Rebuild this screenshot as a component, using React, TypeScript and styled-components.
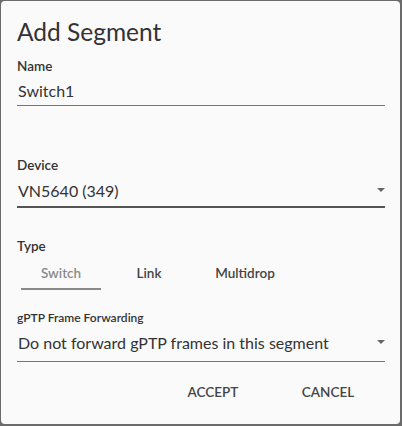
import React from "react";
import styled, { createGlobalStyle } from "styled-components";

const Global = createGlobalStyle`
  html, body { margin: 0; padding: 0; background: #6b6b6b; }
  body { font-family: "Lato", "Noto Sans", sans-serif; }
`;

const Frame = styled.div`
  width: 402px;
  height: 426px;
  box-sizing: border-box;
  padding: 1px 2px 2px 1px;
  background: #6b6b6b;
`;

const Dialog = styled.div`
  height: 100%;
  box-sizing: border-box;
  background: #fafafa;
  border-radius: 4px;
  padding: 14px 15px 0 16px;
  display: flex;
  flex-direction: column;
  color: #333;
`;

const Title = styled.h1`
  margin: 0;
  font-size: 24.5px;
  font-weight: 400;
  line-height: 34px;
  color: #333;
`;

const Label = styled.div<{ $small?: boolean }>`
  font-size: ${(p) => (p.$small ? "12px" : "13.5px")};
  font-weight: 600;
  color: #333;
  line-height: 18px;
`;

const Field = styled.div<{ $focused?: boolean; $h: number; $pb?: number }>`
  display: flex;
  align-items: center;
  justify-content: space-between;
  box-sizing: border-box;
  height: ${(p) => p.$h}px;
  padding: 0 0 ${(p) => p.$pb ?? 0}px 1px;
  border-bottom: ${(p) => (p.$focused ? "2px solid #555" : "1px solid #777")};
  font-size: 16px;
  color: #333;
`;

const Arrow = styled.span`
  width: 0;
  height: 0;
  border-left: 4px solid transparent;
  border-right: 4px solid transparent;
  border-top: 4px solid #666;
`;

const Section = styled.div<{ $top: number }>`
  margin-top: ${(p) => p.$top}px;
  display: flex;
  flex-direction: column;
`;

const Tabs = styled.div`
  display: flex;
  margin-left: 4px;
`;

const Tab = styled.div<{ $active?: boolean; $w: number }>`
  width: ${(p) => p.$w}px;
  height: 35px;
  box-sizing: border-box;
  padding-top: 2px;
  display: flex;
  align-items: center;
  justify-content: center;
  font-size: 13.5px;
  font-weight: 600;
  color: ${(p) => (p.$active ? "#8a8a8a" : "#444")};
  border-bottom: 2px solid ${(p) => (p.$active ? "#8a8a8a" : "transparent")};
`;

const Actions = styled.div`
  display: flex;
  justify-content: flex-end;
  gap: 27px;
  margin-top: 12px;
  padding-right: 13px;
`;

const Button = styled.button`
  width: 88px;
  height: 36px;
  background: none;
  border: none;
  padding: 0;
  font-family: inherit;
  font-size: 13.5px;
  font-weight: 600;
  color: #444;
  text-transform: uppercase;
  cursor: pointer;
`;

export default function App() {
  return (
    <>
      <Global />
      <Frame>
        <Dialog>
          <Title>Add Segment</Title>
          <Section $top={8}>
            <Label>Name</Label>
            <Field $h={31}>Switch1</Field>
          </Section>
          <Section $top={50}>
            <Label>Device</Label>
            <Field $focused $h={34}>
              VN5640 (349)
              <Arrow />
            </Field>
          </Section>
          <Section $top={29}>
            <Label>Type</Label>
            <Tabs>
              <Tab $active $w={80}>Switch</Tab>
              <Tab $w={96}>Link</Tab>
              <Tab $w={96}>Multidrop</Tab>
            </Tabs>
          </Section>
          <Section $top={19}>
            <Label $small>gPTP Frame Forwarding</Label>
            <Field $h={35} $pb={4}>
              Do not forward gPTP frames in this segment
              <Arrow />
            </Field>
          </Section>
          <Actions>
            <Button>Accept</Button>
            <Button>Cancel</Button>
          </Actions>
        </Dialog>
      </Frame>
    </>
  );
}
